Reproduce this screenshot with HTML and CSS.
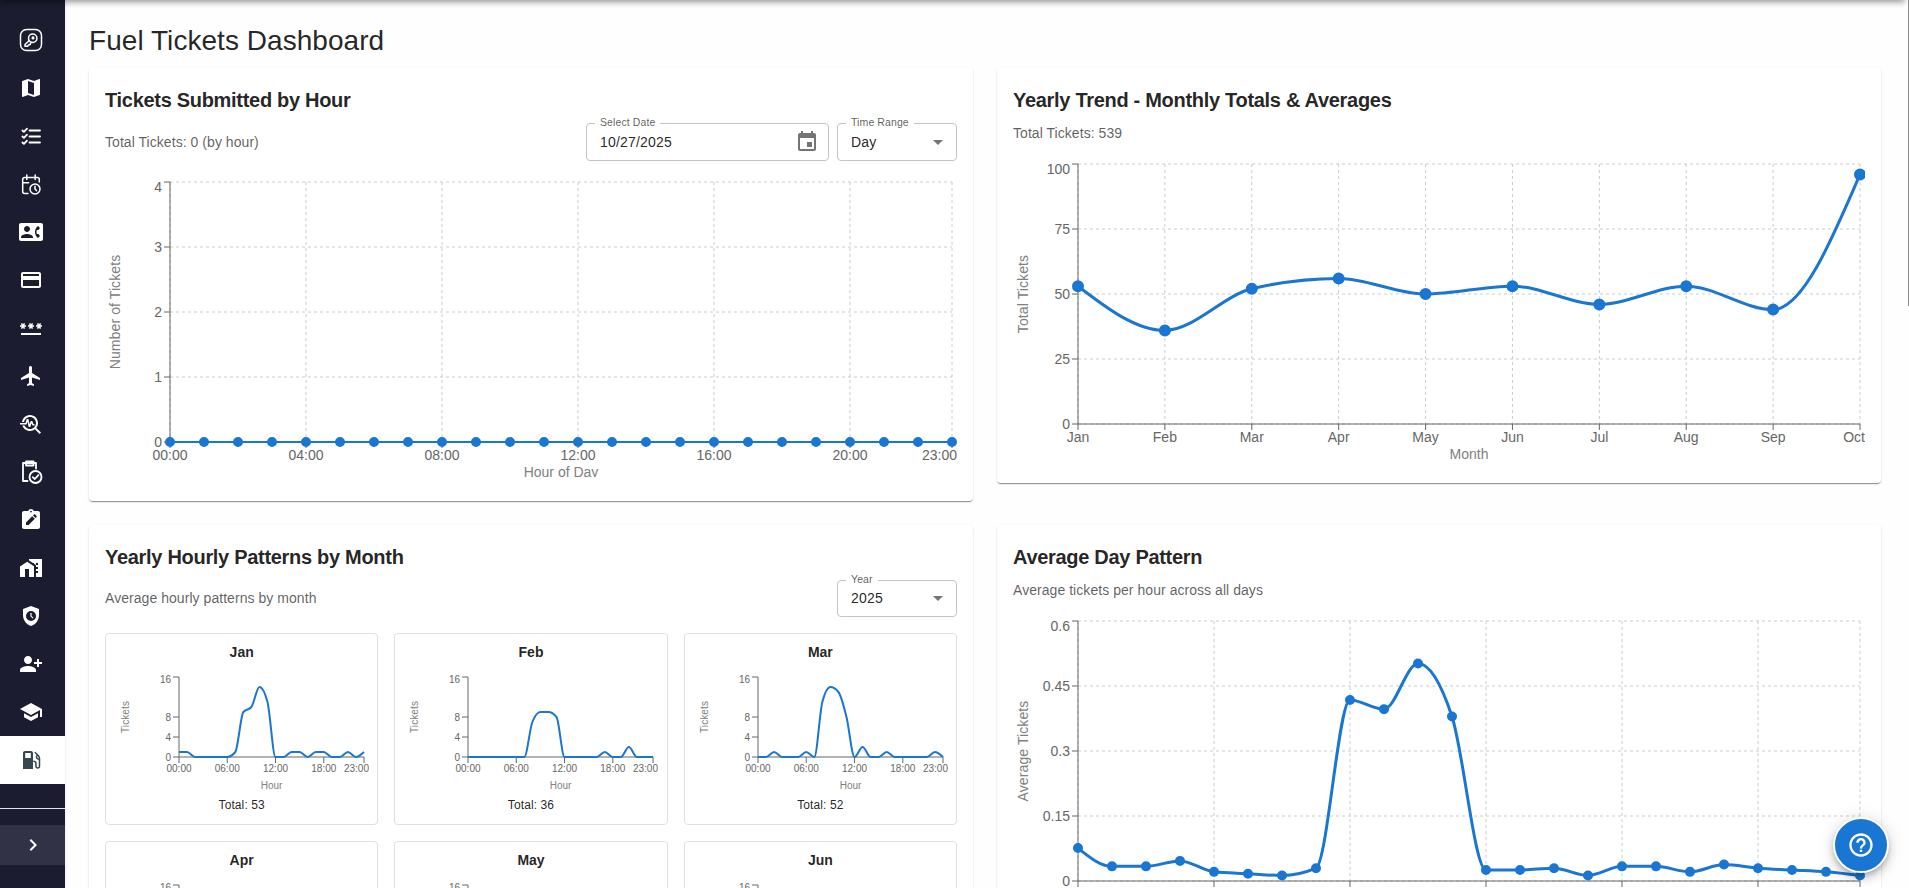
FILE: index.html
```html
<!DOCTYPE html>
<html lang="en">
<head>
  <meta charset="UTF-8"/>
  <meta name="viewport" content="width=device-width,initial-scale=1.0"/>
  <title>Fuel Tickets Dashboard</title>
  <link rel="stylesheet" href="styles.css">
</head>
<body>
  <div class="top-shadow"></div>
  <nav class="sidebar">
    <a class="nav-item" title="Access">
      <svg class="line" viewBox="0 0 24 24"><rect x="1.5" y="1.5" width="21" height="21" rx="6"/><circle cx="13.7" cy="10.2" r="4.2"/><circle cx="14" cy="9.900" r=".8"/><path d="M10.300 12.500 6 16.500v1.800h2.600l1-1.300 1.600-.4.3-1.400 1.200-.8"/></svg>
    </a>
    <a class="nav-item" title="Map">
      <svg viewBox="0 0 24 24"><path d="m20.5 3-.16.03L15 5.1 9 3 3.36 4.9c-.21.07-.36.25-.36.48V20.5c0 .28.22.5.5.5l.16-.03L9 18.9l6 2.1 5.64-1.9c.21-.07.36-.25.36-.48V3.5c0-.28-.22-.5-.5-.5M15 19l-6-2.11V5l6 2.11z"/></svg>
    </a>
    <a class="nav-item" title="Checklist">
      <svg class="line bold" viewBox="0 0 24 24"><path d="M10.5 6.500H21M10.500 12.500H21M10.500 18.500H21M3.400 6.500l1.500 1.400L8 4.700M3.400 12.500l1.500 1.400L8 10.700M3.400 18.500l1.500 1.400L8 16.700"/></svg>
    </a>
    <a class="nav-item" title="Schedule">
      <svg class="line" viewBox="0 0 24 24"><path d="M20.300 10V7.500a2 2 0 0 0-2-2H5.700a2 2 0 0 0-2 2v12a2 2 0 0 0 2 2H9M7.800 3v4.500M16.200 3v4.500M3.700 10.800h6"/><circle cx="16" cy="17" r="5"/><path d="M16 14.300V17l1.500 1.600"/></svg>
    </a>
    <a class="nav-item" title="Contacts">
      <svg viewBox="0 0 24 24"><path d="M22 3H2C.9 3 0 3.9 0 5v14c0 1.1.9 2 2 2h20c1.1 0 1.99-.9 1.99-2L24 5c0-1.1-.9-2-2-2M8 6c1.66 0 3 1.34 3 3s-1.34 3-3 3-3-1.34-3-3 1.34-3 3-3m6 12H2v-1c0-2 4-3.1 6-3.1s6 1.1 6 3.1zm3.85-4h1.64L21 16l-1.99 1.99c-1.31-.98-2.28-2.38-2.73-3.99-.18-.64-.28-1.31-.28-2s.1-1.36.28-2c.45-1.62 1.42-3.01 2.73-3.99L21 8l-1.51 2h-1.64c-.22.63-.35 1.3-.35 2s.13 1.37.35 2"/></svg>
    </a>
    <a class="nav-item" title="Cards">
      <svg viewBox="0 0 24 24"><path d="M20 4H4c-1.11 0-1.99.89-1.99 2L2 18c0 1.11.89 2 2 2h16c1.11 0 2-.89 2-2V6c0-1.11-.89-2-2-2m0 14H4v-6h16zm0-10H4V6h16z"/></svg>
    </a>
    <a class="nav-item" title="Passwords">
      <svg viewBox="0 0 24 24"><path d="M2 17h20v2H2zm1.15-4.05L4 11.47l.85 1.48 1.3-.75-.85-1.48H7v-1.5H5.3l.85-1.47L4.85 7 4 8.47 3.15 7l-1.3.75.85 1.47H1v1.5h1.7l-.85 1.48zm6.7-.75 1.3.75.85-1.48.85 1.48 1.3-.75-.85-1.48H15v-1.5h-1.7l.85-1.47-1.3-.75L12 8.47 11.15 7l-1.3.75.85 1.47H9v1.5h1.7zM23 9.22h-1.7l.85-1.47-1.3-.75L20 8.47 19.15 7l-1.3.75.85 1.47H17v1.5h1.7l-.85 1.48 1.3.75.85-1.48.85 1.48 1.3-.75-.85-1.48H23z"/></svg>
    </a>
    <a class="nav-item" title="Flights">
      <svg viewBox="0 0 24 24"><path d="M21 16v-2l-8-5V3.5c0-.83-.67-1.5-1.5-1.5S10 2.67 10 3.5V9l-8 5v2l8-2.5V19l-2 1.5V22l3.5-1 3.5 1v-1.5L13 19v-5.5z"/></svg>
    </a>
    <a class="nav-item" title="Troubleshoot">
      <svg viewBox="0 0 24 24"><path d="m22 20.59-4.69-4.69C18.37 14.55 19 12.85 19 11c0-4.42-3.58-8-8-8-4.08 0-7.44 3.05-7.93 7h2.02C5.57 7.17 8.03 5 11 5c3.31 0 6 2.69 6 6s-2.69 6-6 6c-2.42 0-4.5-1.44-5.45-3.5H3.4C4.45 16.69 7.46 19 11 19c1.85 0 3.55-.63 4.9-1.69L20.59 22z"/><path d="M8.43 9.69 9.65 15h1.64l1.26-3.78.95 2.28h2V12h-1l-1.25-3h-1.54l-1.12 3.37L9.35 7H7.7l-1.25 4H1v1.5h6.55z"/></svg>
    </a>
    <a class="nav-item" title="Inspections">
      <svg class="line bold" viewBox="0 0 24 24"><path d="M8.5 21H4V3h13v5.5M7 3v2.5h7.500V1.300H7z"/><circle cx="16.5" cy="17" r="6"/><path d="m13.800 17.200 2 1.800 3.600-3.800"/></svg>
    </a>
    <a class="nav-item" title="Assignments">
      <svg viewBox="0 0 24 24"><path fill-rule="evenodd" d="M19 3h-4.18C14.4 1.84 13.3 1 12 1s-2.4.84-2.82 2H5c-1.1 0-2 .9-2 2v14c0 1.1.9 2 2 2h14c1.1 0 2-.9 2-2V5c0-1.1-.9-2-2-2m-7-.3a.9.9 0 1 1 0 1.800.9.9 0 0 1 0-1.800M7 17v-2.600l6.200-6.200 2.600 2.600L9.600 17zm9.600-7L14 7.400l1-1c.3-.3.8-.3 1.100 0l1.500 1.500c.3.3.3.8 0 1.100z"/></svg>
    </a>
    <a class="nav-item" title="Facilities">
      <svg viewBox="0 0 24 24"><path d="M8.17 5.7 1 10.48V21h5v-8h4v8h5V10.25z"/><path d="M10 3v1.51l2 1.33L13.73 7H15v.85l2 1.34V11h2v2h-2v2h2v2h-2v4h6V3zm9 6h-2V7h2z"/></svg>
    </a>
    <a class="nav-item" title="Shifts">
      <svg viewBox="0 0 24 24"><path fill-rule="evenodd" d="m12 2-8 3v6.1c0 5.05 3.41 9.76 8 10.9 4.59-1.14 8-5.85 8-10.9V5zm0 5a5 5 0 1 1 0 10 5 5 0 0 1 0-10m-.6 2v3.300l2.300 2.300.8-.8-1.900-1.900V9z"/></svg>
    </a>
    <a class="nav-item" title="Add user">
      <svg viewBox="0 0 24 24"><path d="M13 8c0-2.21-1.79-4-4-4S5 5.79 5 8s1.79 4 4 4 4-1.79 4-4m2 2v2h3v3h2v-3h3v-2h-3V7h-2v3zM1 18v2h16v-2c0-2.66-5.33-4-8-4s-8 1.34-8 4"/></svg>
    </a>
    <a class="nav-item" title="Training">
      <svg viewBox="0 0 24 24"><path d="M5 13.18v4L12 21l7-3.82v-4L12 17zM12 3 1 9l11 6 9-4.91V17h2V9z"/></svg>
    </a>
    <a class="nav-item active" title="Fuel tickets">
      <svg viewBox="0 0 24 24"><path fill-rule="evenodd" d="M6 3h6c1.1 0 2 .9 2 2v16H4V5c0-1.1.9-2 2-2m.2 2v5h5.600V5z"/><path class="hose" d="m15.800 4.300 3.700 3.500c.8.8 1 1.600 1 2.700v7.300c0 3-3.600 3-3.600 0V15c0-1.200-.8-1.800-2.600-1.800M20.300 11.300c-2.600 0-3.600-2.400-2-4"/></svg>
    </a>
    <div class="nav-divider"></div>
    <button class="expand-btn" title="Expand">
      <svg viewBox="0 0 24 24"><path d="M10 6 8.59 7.41 13.17 12l-4.58 4.59L10 18l6-6z"/></svg>
    </button>
  </nav>

  <main class="content">
    <h1 class="page-title">Fuel Tickets Dashboard</h1>
    <div class="grid">
      <section class="card">
        <h2 class="card-title">Tickets Submitted by Hour</h2>
        <div class="card-row">
          <p class="sub">Total Tickets: 0 (by hour)</p>
          <div class="fields">
            <div class="field date">
              <span class="label">Select Date</span>
              <span>10/27/2025</span>
              <svg viewBox="0 0 24 24"><path d="M17 12h-5v5h5zM16 1v2H8V1H6v2H5c-1.11 0-1.99.9-1.99 2L3 19c0 1.1.89 2 2 2h14c1.1 0 2-.9 2-2V5c0-1.1-.9-2-2-2h-1V1zm3 18H5V8h14z"/></svg>
            </div>
            <div class="field select">
              <span class="label">Time Range</span>
              <span>Day</span>
              <svg viewBox="0 0 24 24"><path d="m7 10 5 5 5-5z"/></svg>
            </div>
          </div>
        </div>
        <div class="chart" id="hourChart"></div>
      </section>

      <section class="card">
        <h2 class="card-title">Yearly Trend - Monthly Totals &amp; Averages</h2>
        <p class="sub alone">Total Tickets: 539</p>
        <div class="chart" id="yearChart"></div>
      </section>

      <section class="card">
        <h2 class="card-title">Yearly Hourly Patterns by Month</h2>
        <div class="card-row year-row">
          <p class="sub">Average hourly patterns by month</p>
          <div class="field select">
            <span class="label">Year</span>
            <span>2025</span>
            <svg viewBox="0 0 24 24"><path d="m7 10 5 5 5-5z"/></svg>
          </div>
        </div>
        <div class="months" id="months"></div>
      </section>

      <section class="card">
        <h2 class="card-title">Average Day Pattern</h2>
        <p class="sub alone">Average tickets per hour across all days</p>
        <div class="chart" id="dayChart"></div>
      </section>
    </div>
  </main>
  <div class="scroll-thumb"></div>
  <button class="help-btn" title="Help">
    <svg viewBox="0 0 24 24"><path d="M11 18h2v-2h-2zm1-16C6.48 2 2 6.48 2 12s4.48 10 10 10 10-4.48 10-10S17.52 2 12 2m0 18c-4.41 0-8-3.59-8-8s3.59-8 8-8 8 3.59 8 8-3.59 8-8 8m0-14c-2.21 0-4 1.79-4 4h2c0-1.1.9-2 2-2s2 .9 2 2c0 2-3 1.75-3 5h2c0-2.25 3-2.5 3-5 0-2.21-1.79-4-4-4"/></svg>
  </button>
  <script src="charts.js"></script>
</body>
</html>
```

FILE: styles.css
```css
* { box-sizing:border-box; }
html { overflow:hidden; }
body {
  margin:0; height:100vh; overflow:hidden; display:flex; background:#fefefe;
  font-family:"Liberation Sans",Arial,sans-serif; color:rgba(0,0,0,.87);
}
h1, h2, h3, p { margin:0; }
.top-shadow {
  position:absolute; top:-10px; left:0; width:1905px; height:10px; z-index:5;
  box-shadow:0 2px 4px -1px rgba(0,0,0,.2), 0 4px 5px 0 rgba(0,0,0,.14), 0 1px 10px 0 rgba(0,0,0,.12);
}
.scroll-thumb { position:absolute; top:0; right:0; width:1px; height:306px; background:#8b8b8b; }

/* sidebar */
.sidebar {
  width:65px; flex:none; padding-top:16px; background:#1b1c2f;
  display:flex; flex-direction:column; box-shadow:0 0 3px rgba(27,28,60,.12);
}
.nav-item {
  height:48px; flex:none; padding-right:3px; color:#fff;
  display:flex; align-items:center; justify-content:center;
}
.nav-item svg { width:24px; height:24px; fill:currentColor; }
.nav-item svg.line { fill:none; stroke:currentColor; stroke-width:1.5; stroke-linecap:round; stroke-linejoin:round; }
.nav-item svg.bold { stroke-width:1.8; }
.nav-item.active { background:#fff; color:#37474f; }
.hose { fill:none; stroke:currentColor; stroke-width:1.5; }
.nav-divider { height:1px; margin-top:24px; flex:none; background:#e4e4ea; }
.expand-btn {
  margin-top:16px; height:40px; padding:0 0 0 1px; border:none; background:#323246;
  display:flex; align-items:center; justify-content:center;
}
.expand-btn svg { width:24px; height:24px; fill:#fff; }

/* content */
.content { flex:1; min-width:0; height:100vh; overflow:hidden; padding:22px 28px 0 24px; }
.page-title { height:46px; font-size:28px; line-height:37px; font-weight:400; letter-spacing:.05px; }
.grid { display:grid; grid-template-columns:1fr 1fr; gap:24px; align-items:start; }
.card {
  padding:16px 16px 24px; border-radius:4px; background:#fff;
  box-shadow:0 2px 1px -1px rgba(0,0,0,.3), 0 1px 1px 0 rgba(0,0,0,.14), 0 1px 3px 0 rgba(0,0,0,.1);
}
.card-title { font-size:20px; line-height:32px; font-weight:700; letter-spacing:-.3px; }
.sub { font-size:14px; line-height:20px; letter-spacing:.05px; color:rgba(0,0,0,.64); }
.sub.alone { margin:7px 0 16px; }
.card-row { display:flex; align-items:center; justify-content:space-between; margin:7px 0 16px; }
.fields { display:flex; gap:8px; }
.field {
  position:relative; height:38px; padding:0 6px 0 13px; border:1px solid #c4c4c4; border-radius:4px;
  display:flex; align-items:center; justify-content:space-between; font-size:14px; letter-spacing:.18px;
}
.field.date { width:243px; padding-right:9px; }
.field.select { width:120px; }
.year-row .sub { padding-bottom:2px; }
.year-row .field { height:37px; padding-bottom:1px; }
.field svg { width:24px; height:24px; fill:#757575; }
.label {
  position:absolute; top:-9px; left:8px; padding:0 5px; background:#fff;
  font-size:10.5px; line-height:14px; letter-spacing:.1px; color:rgba(0,0,0,.66);
}

/* charts */
.chart { height:300px; }
.chart svg, .month-chart svg { display:block; overflow:hidden; }
.tick { fill:#666; }
.axis-label { fill:#808080; }
.axis { stroke:#666; fill:none; }
.guide { stroke:#ccc; stroke-dasharray:3 3; }
.curve { stroke:#1976d2; fill:none; }
.point { fill:#1976d2; stroke:#1976d2; stroke-width:2; }
.months { display:grid; grid-template-columns:repeat(3,1fr); gap:16px; }
.month { height:192px; padding:7px 8px; border:1px solid #e0e0e0; border-radius:4px; text-align:center; }
.month-title { margin-bottom:9px; font-size:14px; line-height:22px; font-weight:700; }
.month-chart { height:120px; }
.month-total { margin-top:3px; font-size:12px; line-height:20px; letter-spacing:.1px; }

.help-btn {
  position:absolute; left:1833px; top:817px; width:56px; height:56px; padding:0;
  border:2px solid #fff; border-radius:50%; background:#1976d2;
  display:flex; align-items:center; justify-content:center;
  box-shadow:0 3px 5px -1px rgba(0,0,0,.2), 0 6px 10px 0 rgba(0,0,0,.14), 0 1px 18px 0 rgba(0,0,0,.12);
}
.help-btn svg { width:28px; height:28px; fill:#fff; }
```

FILE: charts.js
```js
const MARGIN = 5, Y_AXIS = 60, X_AXIS = 30;
const hours = Array.from({ length: 24 }, (_, i) => String(i).padStart(2, '0') + ':00');

// monotone cubic interpolation, so the curve never overshoots a point
function monotone(pts) {
  const n = pts.length;
  const slope = i => (pts[i + 1][1] - pts[i][1]) / (pts[i + 1][0] - pts[i][0]);
  const t = [];
  for (let i = 1; i < n - 1; i++) {
    const s0 = slope(i - 1), s1 = slope(i), p = (s0 + s1) / 2;
    t[i] = (Math.sign(s0) + Math.sign(s1)) * Math.min(Math.abs(s0), Math.abs(s1), 0.5 * Math.abs(p)) || 0;
  }
  t[0] = (3 * slope(0) - t[1]) / 2;
  t[n - 1] = (3 * slope(n - 2) - t[n - 2]) / 2;
  let d = `M${pts[0]}`;
  for (let i = 0; i < n - 1; i++) {
    const [x0, y0] = pts[i], [x1, y1] = pts[i + 1], dx = (x1 - x0) / 3;
    d += `C${x0 + dx},${y0 + dx * t[i]},${x1 - dx},${y1 - dx * t[i + 1]},${x1},${y1}`;
  }
  return d;
}

function drawChart(el, o) {
  const w = el.clientWidth, h = el.clientHeight, fs = o.font || 14;
  const left = MARGIN + Y_AXIS, right = w - MARGIN, top = MARGIN, bottom = h - MARGIN - X_AXIS;
  const px = i => left + (right - left) * i / (o.data.length - 1);
  const py = v => bottom - (bottom - top) * v / o.max;
  let s = '';

  if (o.grid) {
    o.yTicks.forEach(v => s += `<line class="guide" x1="${left}" x2="${right}" y1="${py(v)}" y2="${py(v)}"/>`);
    o.xTicks.forEach(i => s += `<line class="guide" x1="${px(i)}" x2="${px(i)}" y1="${top}" y2="${bottom}"/>`);
  }
  s += `<path class="axis" d="M${left},${top}V${bottom}H${right}"/>`;
  o.yTicks.forEach(v => {
    const y = py(v), shift = v === o.max ? fs * 0.355 - (fs < 12 ? 1 : 0) : 0;
    s += `<line class="axis" x1="${left - 6}" x2="${left}" y1="${y}" y2="${y}"/>`;
    s += `<text class="tick" x="${left - 8}" y="${y + shift + fs * 0.355}" text-anchor="end">${v}</text>`;
  });
  o.xTicks.forEach(i => {
    const x = px(i), last = i === o.data.length - 1;
    s += `<line class="axis" x1="${x}" x2="${x}" y1="${bottom}" y2="${bottom + 6}"/>`;
    s += `<text class="tick" x="${last ? w : x}" y="${bottom + 8 + fs * 0.71}" text-anchor="${last ? 'end' : 'middle'}">${o.labels[i]}</text>`;
  });

  const mid = (top + bottom) / 2;
  s += `<text class="axis-label" x="${(left + right) / 2}" y="${h - 5 + fs * 0.355 - (fs < 12 ? 1.5 : 0)}" text-anchor="middle">${o.xLabel}</text>`;
  s += `<text class="axis-label" letter-spacing=".1" transform="translate(${fs < 12 ? 14.500 : 15},${mid}) rotate(-90)" text-anchor="middle">${o.yLabel}</text>`;

  const pts = o.data.map((v, i) => [px(i), py(v)]);
  s += `<path class="curve" stroke-width="${o.stroke}" d="${monotone(pts)}"/>`;
  if (o.dot) pts.forEach(p => s += `<circle class="point" cx="${p[0]}" cy="${p[1]}" r="${o.dot}"/>`);
  el.innerHTML = `<svg width="${w}" height="${h}" font-size="${fs}">${s}</svg>`;
}

drawChart(document.getElementById('hourChart'), {
  data: hours.map(() => 0), labels: hours, max: 4, yTicks: [0, 1, 2, 3, 4],
  xTicks: [0, 4, 8, 12, 16, 20, 23], xLabel: 'Hour of Day', yLabel: 'Number of Tickets',
  grid: true, stroke: 2, dot: 4
});

drawChart(document.getElementById('yearChart'), {
  data: [53, 36, 52, 56, 50, 53, 46, 53, 44, 96],
  labels: ['Jan', 'Feb', 'Mar', 'Apr', 'May', 'Jun', 'Jul', 'Aug', 'Sep', 'Oct'],
  max: 100, yTicks: [0, 25, 50, 75, 100], xTicks: [0, 1, 2, 3, 4, 5, 6, 7, 8, 9],
  xLabel: 'Month', yLabel: 'Total Tickets', grid: true, stroke: 3, dot: 5
});

const DAYS = 237;
const byHour = [18, 8, 8, 11, 5, 4, 3, 7, 99, 94, 119, 90, 6, 6, 7, 3, 8, 8, 5, 9, 7, 6, 5, 3];
drawChart(document.getElementById('dayChart'), {
  data: byHour.map(n => n / DAYS), labels: hours, max: 0.6, yTicks: [0, 0.15, 0.3, 0.45, 0.6],
  xTicks: [0, 4, 8, 12, 16, 20, 23], xLabel: 'Hour of Day', yLabel: 'Average Tickets',
  grid: true, stroke: 3, dot: 4
});

const months = {
  Jan: [1, 1, 0, 0, 0, 0, 0, 1, 9, 10, 14, 11, 0, 0, 1, 1, 0, 1, 1, 0, 0, 1, 0, 1],
  Feb: [0, 0, 0, 0, 0, 0, 0, 0, 7, 9, 9, 8, 0, 0, 0, 0, 0, 1, 0, 0, 2, 0, 0, 0],
  Mar: [0, 0, 1, 0, 0, 0, 1, 0, 11, 14, 13, 8, 0, 2, 0, 0, 1, 0, 0, 0, 0, 0, 1, 0],
  Apr: [2, 1, 0, 1, 0, 0, 0, 1, 12, 10, 14, 9, 1, 0, 1, 0, 1, 0, 0, 1, 1, 0, 1, 0],
  May: [2, 0, 1, 1, 0, 1, 0, 0, 11, 9, 12, 9, 0, 1, 0, 0, 1, 1, 0, 1, 0, 0, 0, 0],
  Jun: [3, 1, 1, 1, 0, 0, 0, 1, 10, 9, 13, 9, 0, 0, 1, 0, 1, 1, 0, 1, 0, 1, 0, 0]
};
const box = document.getElementById('months');
for (const name in months) {
  const total = months[name].reduce((a, b) => a + b, 0);
  box.insertAdjacentHTML('beforeend', `
    <div class="month">
      <h3 class="month-title">${name}</h3>
      <div class="month-chart"></div>
      <p class="month-total">Total: ${total}</p>
    </div>`);
  drawChart(box.lastElementChild.querySelector('.month-chart'), {
    data: months[name], labels: hours, max: 16, yTicks: [0, 4, 8, 16],
    xTicks: [0, 6, 12, 18, 23], xLabel: 'Hour', yLabel: 'Tickets', font: 10, stroke: 2
  });
}
```
